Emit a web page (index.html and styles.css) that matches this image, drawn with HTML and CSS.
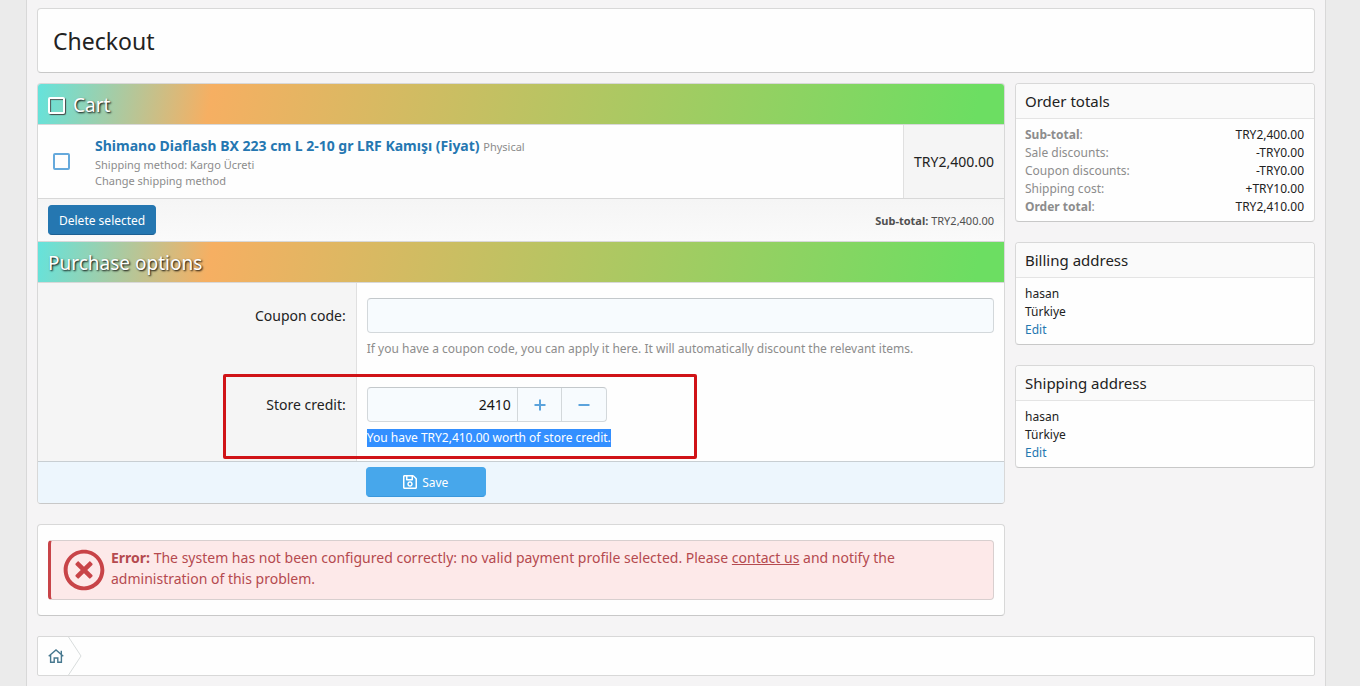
FILE: index.html
```html
<!DOCTYPE html>
<html lang="en">
  <head>
    <meta charset="utf-8">
    <title>Checkout</title>
    <link rel="stylesheet" href="styles.css">
  </head>
  <body>
    <div class="page">
      <div class="block page-title">
        <h1>Checkout</h1>
      </div>

      <div class="columns">
        <div class="main">
          <form class="block">
            <h2 class="block-header">
              <label class="check-all"><input type="checkbox" class="checkbox checkbox-light">Cart</label>
            </h2>
            <div class="cart-item">
              <div class="cart-check">
                <input type="checkbox" class="checkbox" aria-label="Select item">
              </div>
              <div class="cart-info">
                <div class="cart-title"><a href="#">Shimano Diaflash BX 223 cm L 2-10 gr LRF Kamışı (Fiyat)</a> <span>Physical</span></div>
                <div class="cart-note">Shipping method: Kargo Ücreti</div>
                <div class="cart-note"><a href="#">Change shipping method</a></div>
              </div>
              <div class="cart-price">TRY2,400.00</div>
            </div>
            <div class="cart-footer">
              <button type="button" class="button button-dark">Delete selected</button>
              <div><b>Sub-total:</b> TRY2,400.00</div>
            </div>

            <h2 class="block-header block-header-next">Purchase options</h2>
            <div class="form-row">
              <div class="form-label"><label for="coupon">Coupon code:</label></div>
              <div class="form-field">
                <input type="text" id="coupon" class="input">
                <div class="help">If you have a coupon code, you can apply it here. It will automatically discount the relevant items.</div>
              </div>
            </div>
            <div class="form-row">
              <div class="form-label"><label for="credit">Store credit:</label></div>
              <div class="form-field">
                <div class="number-box">
                  <input type="text" id="credit" class="number-input" value="2410">
                  <button type="button" class="number-button" aria-label="Increase">
                    <svg width="12" height="12" viewBox="0 0 12 12"><path d="M6 0.5v11M0.5 6h11" /></svg>
                  </button>
                  <button type="button" class="number-button" aria-label="Decrease">
                    <svg width="12" height="12" viewBox="0 0 12 12"><path d="M0.5 6h11" /></svg>
                  </button>
                </div>
                <div class="help"><span class="selected">You have TRY2,410.00 worth of store credit.</span></div>
              </div>
              <div class="highlight-box"></div>
            </div>
            <div class="submit-row">
              <button type="button" class="button button-save">
                <svg width="14" height="16" viewBox="0 0 448 512"><path d="M433.941 129.941l-83.882-83.882A48 48 0 0 0 316.118 32H48C21.49 32 0 53.49 0 80v352c0 26.51 21.49 48 48 48h352c26.51 0 48-21.49 48-48V163.882a48 48 0 0 0-14.059-33.941zM272 80v80H144V80h128zm122 352H54a6 6 0 0 1-6-6V86a6 6 0 0 1 6-6h42v104c0 13.255 10.745 24 24 24h176c13.255 0 24-10.745 24-24V83.882l78.243 78.243a6 6 0 0 1 1.757 4.243V426a6 6 0 0 1-6 6zM224 232c-48.523 0-88 39.477-88 88s39.477 88 88 88 88-39.477 88-88-39.477-88-88-88zm0 128c-22.056 0-40-17.944-40-40s17.944-40 40-40 40 17.944 40 40-17.944 40-40 40z" /></svg>
                Save
              </button>
            </div>
          </form>

          <div class="block error-block">
            <div class="error">
              <svg width="42" height="42" viewBox="0 0 512 512"><path d="M256 8C119 8 8 119 8 256s111 248 248 248 248-111 248-248S393 8 256 8zm0 448c-110.5 0-200-89.5-200-200S145.5 56 256 56s200 89.5 200 200-89.5 200-200 200zm101.8-262.2L295.6 256l62.2 62.2c4.7 4.7 4.7 12.3 0 17l-22.6 22.6c-4.7 4.7-12.3 4.7-17 0L256 295.6l-62.2 62.2c-4.7 4.7-12.3 4.7-17 0l-22.6-22.6c-4.7-4.7-4.7-12.3 0-17l62.2-62.2-62.2-62.2c-4.7-4.7-4.7-12.3 0-17l22.6-22.6c4.7-4.7 12.3-4.7 17 0l62.2 62.2 62.2-62.2c4.7-4.7 12.3-4.7 17 0l22.6 22.6c4.7 4.7 4.7 12.3 0 17z" /></svg>
              <p><b>Error:</b> The system has not been configured correctly: no valid payment profile selected. Please <a href="#">contact us</a> and notify the administration of this problem.</p>
            </div>
          </div>
        </div>

        <div class="sidebar">
          <div class="block">
            <h3 class="side-header">Order totals</h3>
            <dl class="side-body totals">
              <dt><b>Sub-total</b>:</dt><dd>TRY2,400.00</dd>
              <dt>Sale discounts:</dt><dd>-TRY0.00</dd>
              <dt>Coupon discounts:</dt><dd>-TRY0.00</dd>
              <dt>Shipping cost:</dt><dd>+TRY10.00</dd>
              <dt><b>Order total</b>:</dt><dd>TRY2,410.00</dd>
            </dl>
          </div>
          <div class="block">
            <h3 class="side-header">Billing address</h3>
            <div class="side-body">
              <div>hasan</div>
              <div>Türkiye</div>
              <a href="#">Edit</a>
            </div>
          </div>
          <div class="block">
            <h3 class="side-header">Shipping address</h3>
            <div class="side-body">
              <div>hasan</div>
              <div>Türkiye</div>
              <a href="#">Edit</a>
            </div>
          </div>
        </div>
      </div>

      <nav class="breadcrumb">
        <a href="#" aria-label="Home">
          <svg width="16" height="14" viewBox="0 0 16 14"><path d="M0.7 7.2L8 1l7.3 6.2M2.6 6v7.2h3.6V9h3.6v4.2h3.6V6M13.3 5.2V1.8" /></svg>
        </a>
        <svg class="breadcrumb-arrow" width="14" height="38" viewBox="0 0 14 38"><path d="M0.5 0L13 19L0.5 38" /></svg>
      </nav>
    </div>
  </body>
</html>
```
FILE: styles.css
```css
* {
  box-sizing: border-box;
}

body {
  margin: 0;
  padding-right: 8px;
  background-color: #ebebeb;
  color: #222;
  font-family: 'Noto Sans', 'Open Sans', sans-serif;
  font-size: 14px;
  line-height: 21px;
}

h1, h2, h3, p, dl, dd {
  margin: 0;
  font-weight: 400;
}

a {
  color: #2577b1;
  text-decoration: none;
}

input, button {
  font-family: inherit;
}

.page {
  max-width: 1300px;
  min-height: 100vh;
  margin: 0 auto;
  padding: 8px 10px 10px;
  background-color: #f5f4f5;
  border: 1px solid #d8d8d8;
  border-width: 0 1px;
}

.block {
  background-color: #fefefe;
  border: 1px solid #d8d8d8;
  border-bottom-color: #c8c8c8;
  border-radius: 4px;
}

.page-title {
  padding: 17px 15px 15px;
  margin-bottom: 10px;
}

.page-title h1 {
  font-size: 23px;
  line-height: 31px;
}

.columns {
  display: grid;
  grid-template-columns: 1fr 300px;
  gap: 10px;
  align-items: start;
}

.main, .sidebar {
  display: grid;
  gap: 20px;
}

/* cart */
.block-header {
  padding: 7px 10px 5px;
  background-image: linear-gradient(100deg, #64e3dc 0%, #f6af62 18%, #6cde62 97%);
  border-bottom: 1px solid #d8d8d8;
  border-radius: 3px 3px 0 0;
  color: #fff;
  font-size: 19px;
  line-height: 28px;
  text-shadow: 1px 1px 2px #000;
}

.block-header-next {
  border-top: 1px solid #d8d8d8;
  border-radius: 0;
}

.check-all {
  display: flex;
  align-items: center;
  gap: 8px;
}

.checkbox {
  appearance: none;
  display: block;
  width: 17px;
  height: 17px;
  margin: 0;
  border: 2px solid #65a9dc;
  border-radius: 2px;
}

.checkbox-light {
  border-color: #fff;
  box-shadow: 1px 1px 1px #444, inset 1px 1px 1px #555;
}

.cart-item {
  display: flex;
  border-bottom: 1px solid #d8d8d8;
}

.cart-check {
  display: flex;
  align-items: center;
  padding: 0 15px;
}

.cart-info {
  flex: 1;
  padding: 10px 10px 9px;
}

.cart-title {
  font-size: 14px;
  font-weight: 700;
}

.cart-title span {
  color: #8c8c8c;
  font-size: 11px;
  font-weight: 400;
}

.cart-note, .cart-note a {
  color: #8c8c8c;
  font-size: 11px;
  line-height: 16px;
}

.cart-price {
  display: flex;
  align-items: center;
  padding: 0 10px;
  background-color: #f5f5f5;
  border-left: 1px solid #e0e0e0;
}

.cart-footer {
  display: flex;
  align-items: center;
  justify-content: space-between;
  padding: 6px 10px;
  background-image: linear-gradient(#f5f5f5, #fafafa);
  color: #505050;
  font-size: 11px;
}

.button {
  height: 30px;
  padding: 0 10px;
  border: 1px solid #2577b1;
  border-radius: 4px;
  color: #fff;
  font-size: 12px;
  cursor: pointer;
}

.button-dark {
  background-color: #2577b1;
  border-bottom-color: #1d6093;
}

/* purchase options */
.form-row {
  position: relative;
  display: grid;
  grid-template-columns: 33% 1fr;
}

.form-label {
  padding: 22px 10px 0;
  background-color: #f5f5f5;
  border-right: 1px solid #e0e0e0;
  text-align: right;
}

.form-field {
  padding: 15px 10px 14px;
}

.input, .number-box {
  display: flex;
  width: 100%;
  height: 35px;
  background-color: #f7fbfe;
  border: 1px solid #d3d8db;
  border-top-color: #c3c8cb;
  border-radius: 4px;
}

.number-box {
  width: 240px;
}

.number-input {
  width: 149px;
  padding: 0 6px;
  background: none;
  border: 0;
  color: #141414;
  font-size: 14px;
  text-align: right;
}

.number-button {
  display: flex;
  flex: 1;
  align-items: center;
  justify-content: center;
  padding: 0;
  background: none;
  border: 0;
  border-left: 1px solid #d3d8db;
  cursor: pointer;
}

.number-button svg {
  fill: none;
  stroke: #5ba3dc;
  stroke-width: 2;
}

.help {
  margin-top: 7px;
  color: #8c8c8c;
  font-size: 12px;
  line-height: 18px;
}

.selected {
  display: inline-block;
  background-color: #338fff;
  color: #fff;
}

/* red frame drawn over the store credit row */
.highlight-box {
  position: absolute;
  top: 2px;
  left: calc(33% - 134px);
  width: 474px;
  height: 85px;
  border: 3px solid #d01317;
  border-radius: 2px;
  pointer-events: none;
}

.submit-row {
  padding: 5px 10px 6px calc(33% + 9px);
  background-color: #edf6fd;
  border-top: 1px solid #c8ced2;
  border-radius: 0 0 3px 3px;
}

.button-save {
  display: flex;
  align-items: center;
  justify-content: center;
  gap: 5px;
  width: 120px;
  background-color: #47a7eb;
  border-color: #47a7eb;
  border-bottom-color: #3a98dc;
}

.button-save svg {
  fill: #fff;
}

/* error */
.error-block {
  padding: 15px 10px;
}

.error {
  display: flex;
  gap: 6px;
  padding: 6px 12px 8px;
  background-color: #fde9e9;
  border: 1px solid #d8cfcf;
  border-left: 3px solid #c84448;
  border-radius: 4px;
  color: #b54a4f;
}

.error svg {
  flex: none;
  margin-top: 2px;
  fill: #c84448;
}

.error a {
  color: #b54a4f;
  text-decoration: underline;
}

/* sidebar */
.side-header {
  padding: 7px 9px 6px;
  background-color: #fafafa;
  border-bottom: 1px solid #e4e4e4;
  border-radius: 3px 3px 0 0;
  font-size: 15px;
  line-height: 21px;
}

.side-body {
  padding: 7px 10px 5px 9px;
  font-size: 12px;
  line-height: 18px;
}

.side-body a {
  display: block;
}

.totals {
  display: grid;
  grid-template-columns: 1fr auto;
}

.totals dt {
  color: #8c8c8c;
}

.totals dd {
  text-align: right;
}

.breadcrumb {
  display: flex;
  align-items: center;
  height: 40px;
  margin-top: 20px;
  padding-left: 10px;
  background-color: #fefefe;
  border: 1px solid #d8d8d8;
  border-radius: 2px;
}

.breadcrumb a {
  display: flex;
}

.breadcrumb svg {
  fill: none;
  stroke: #47788f;
  stroke-width: 1.4;
}

.breadcrumb .breadcrumb-arrow {
  margin-left: 4px;
  stroke: #d8dcdc;
  stroke-width: 1;
}
```
